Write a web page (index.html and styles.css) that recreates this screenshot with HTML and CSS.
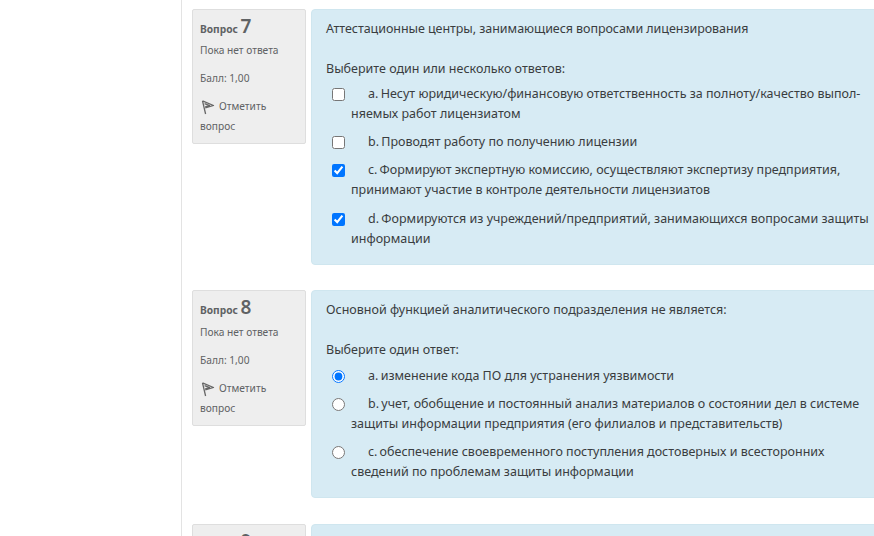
FILE: index.html
```html
<!DOCTYPE html>
<html lang="ru">
<head>
<meta charset="utf-8">
<title>Тест</title>
<link rel="stylesheet" href="styles.css">
</head>
<body>
<div class="page">
  <aside class="rail"></aside>
  <main class="region">
    <section class="que">
      <div class="info">
        <h3 class="qno">Вопрос <span class="num">7</span></h3>
        <div class="state">Пока нет ответа</div>
        <div class="grade">Балл: 1,00</div>
        <div class="flag"><svg class="flag-icon" width="16" height="16" viewBox="0 0 16 16"><path d="M2.5 1.8 L13.5 6.5 L5.2 9 M2.5 1.8 L5.6 15 M4.6 4.6 L9.6 6.6 L5.2 7.8" fill="none" stroke="#666" stroke-width="1.3" stroke-linejoin="round"/></svg><span class="flag-text">Отметить</span><br>вопрос</div>
      </div>
      <div class="form">
        <p class="qtext qtext-tight">Аттестационные центры, занимающиеся вопросами лицензирования</p>
        <p class="prompt">Выберите один или несколько ответов:</p>
        <div class="answers">
          <label class="opt"><input type="checkbox" class="ctl"><span class="let">a.</span> Несут юридическую/финансовую ответственность за полноту/качество выпол-<br>няемых работ лицензиатом</label>
          <label class="opt"><input type="checkbox" class="ctl"><span class="let">b.</span> Проводят работу по получению лицензии</label>
          <label class="opt"><input type="checkbox" class="ctl" checked><span class="let">c.</span> Формируют экспертную комиссию, осуществляют экспертизу предприятия,<br>принимают участие в контроле деятельности лицензиатов</label>
          <label class="opt"><input type="checkbox" class="ctl" checked><span class="let">d.</span> Формируются из учреждений/предприятий, занимающихся вопросами защиты<br>информации</label>
        </div>
      </div>
    </section>
    <section class="que que-second">
      <div class="info">
        <h3 class="qno">Вопрос <span class="num">8</span></h3>
        <div class="state">Пока нет ответа</div>
        <div class="grade">Балл: 1,00</div>
        <div class="flag"><svg class="flag-icon" width="16" height="16" viewBox="0 0 16 16"><path d="M2.5 1.8 L13.5 6.5 L5.2 9 M2.5 1.8 L5.6 15 M4.6 4.6 L9.6 6.6 L5.2 7.8" fill="none" stroke="#666" stroke-width="1.3" stroke-linejoin="round"/></svg><span class="flag-text">Отметить</span><br>вопрос</div>
      </div>
      <div class="form">
        <p class="qtext">Основной функцией аналитического подразделения не является:</p>
        <p class="prompt">Выберите один ответ:</p>
        <div class="answers">
          <label class="opt"><input type="radio" name="q8" class="ctl" checked><span class="let">a.</span> изменение кода ПО для устранения уязвимости</label>
          <label class="opt"><input type="radio" name="q8" class="ctl"><span class="let">b.</span> учет, обобщение и постоянный анализ материалов о состоянии дел в системе<br>защиты информации предприятия (его филиалов и представительств)</label>
          <label class="opt"><input type="radio" name="q8" class="ctl"><span class="let">c.</span> обеспечение своевременного поступления достоверных и всесторонних<br>сведений по проблемам защиты информации</label>
        </div>
      </div>
    </section>
    <section class="que">
      <div class="info">
        <h3 class="qno">Вопрос <span class="num">9</span></h3>
      </div>
      <div class="form"></div>
    </section>
  </main>
</div>
</body>
</html>
```
FILE: styles.css
```css
html, body {
  margin: 0;
  height: 100%;
  overflow: hidden;
  background: #fff;
}
body {
  font-family: "Noto Sans", "Open Sans", sans-serif;
  color: #3a3d3f;
  font-size: 12.5px;
}
.page {
  display: flex;
  width: 1100px;
  height: 536px;
  overflow: hidden;
}
.rail {
  width: 181px;
  flex: none;
  border-right: 1px solid #e3e3e3;
}
.region {
  flex: 1;
  padding: 9px 0 0 10px;
}
.que {
  display: flex;
  align-items: flex-start;
  gap: 5px;
  margin-bottom: 25.5px;
}
.info {
  width: 112px;
  flex: none;
  background: #eee;
  border: 1px solid #dedede;
  border-radius: 2px;
  padding: 6px 0 7px;
  color: #5f6264;
  font-size: 10.2px;
}
.qno {
  margin: 0 0 0 7px;
  font-size: 10.2px;
  font-weight: 700;
  line-height: 20px;
  color: #5f6264;
}
.num {
  font-size: 19px;
  font-weight: 600;
  line-height: 20px;
}
.state, .grade {
  margin: 1px 0 0 7px;
  line-height: 20px;
}
.que-second .state {
  margin-top: 2px;
}
.grade {
  margin-top: 8px;
}
.flag {
  margin: 8px 0 0 7px;
  line-height: 20px;
}
.flag-icon {
  vertical-align: -5px;
  margin-right: 3px;
}
.form {
  flex: 1;
  background: #d7ebf4;
  border: 1px solid #cfe6ef;
  border-radius: 4px;
  padding: 9px 0 15px 14px;
}
.qtext, .prompt {
  margin: 0;
  line-height: 20px;
  white-space: nowrap;
}
.qtext-tight {
  letter-spacing: -0.05px;
}
.prompt {
  margin-top: 20px;
}
.answers {
  margin: 5px 0 0 25px;
}
.que-second .answers {
  margin-top: 6px;
}
.opt {
  display: block;
  line-height: 20px;
  margin-bottom: 8.2px;
  white-space: nowrap;
}
.opt:last-child {
  margin-bottom: 0;
}
.ctl {
  margin: 0 5px 0 -19px;
  vertical-align: -3px;
}
.let {
  margin: 0 -1px 0 18px;
}
```
